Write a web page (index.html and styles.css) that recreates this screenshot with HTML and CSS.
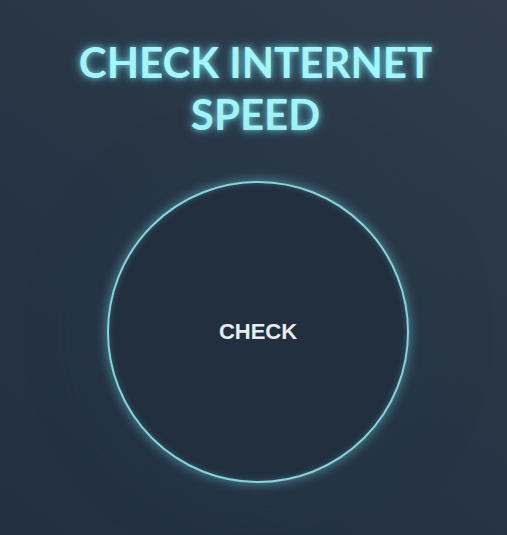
FILE: index.html
```html
<!DOCTYPE html>
<html>
<head>
<meta charset="utf-8">
<link rel="stylesheet" href="styles.css">
</head>
<body>
<main class="page">
  <h1 class="title">CHECK INTERNET<br>SPEED</h1>
  <div class="halo">
    <button class="check-btn">CHECK</button>
  </div>
</main>
</body>
</html>
```
FILE: styles.css
```css
html, body {
  margin: 0;
  padding: 0;
  height: 100%;
}
body {
  background: linear-gradient(35deg, #223041 0%, #263445 45%, #313d4b 100%);
  font-family: "Liberation Sans", Arial, sans-serif;
}
.page {
  display: flex;
  flex-direction: column;
  align-items: center;
  padding-top: 36px;
}
.title {
  margin: 0 0 0 4px;
  font-family: "Lato", "Noto Sans", sans-serif;
  font-weight: 700;
  font-size: 42px;
  line-height: 52px;
  letter-spacing: 0;
  text-align: center;
  color: #a4f6fc;
  text-shadow: 0 0 6px rgba(120, 235, 250, 0.8), 0 0 14px rgba(90, 210, 230, 0.45);
}
.halo {
  margin-top: 41px;
  border-radius: 50%;
  box-shadow: 0 0 60px 20px rgba(40, 60, 75, 0.35);
  margin-left: 9px;
}
.check-btn {
  width: 302px;
  height: 302px;
  border-radius: 50%;
  border: 2px solid #86d4dc;
  background: #222f3f;
  color: #ececec;
  font-family: "Liberation Sans", Arial, sans-serif;
  font-weight: 700;
  font-size: 22px;
  box-shadow: 0 0 12px rgba(110, 210, 225, 0.6), inset 0 0 6px rgba(110, 210, 225, 0.3);
  cursor: pointer;
  padding: 0;
}
```
